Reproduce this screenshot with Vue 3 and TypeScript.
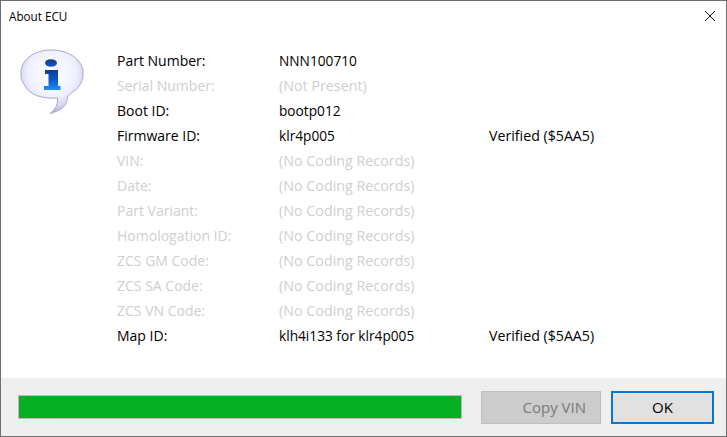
<script setup lang="ts">
interface Row { label: string; value: string; status?: string; on: boolean }
const none = '(No Coding Records)'
const rows: Row[] = [
  { label: 'Part Number:', value: 'NNN100710', on: true },
  { label: 'Serial Number:', value: '(Not Present)', on: false },
  { label: 'Boot ID:', value: 'bootp012', on: true },
  { label: 'Firmware ID:', value: 'klr4p005', status: 'Verified ($5AA5)', on: true },
  { label: 'VIN:', value: none, on: false },
  { label: 'Date:', value: none, on: false },
  { label: 'Part Variant:', value: none, on: false },
  { label: 'Homologation ID:', value: none, on: false },
  { label: 'ZCS GM Code:', value: none, on: false },
  { label: 'ZCS SA Code:', value: none, on: false },
  { label: 'ZCS VN Code:', value: none, on: false },
  { label: 'Map ID:', value: 'klh4i133 for klr4p005', status: 'Verified ($5AA5)', on: true },
]
</script>

<template>
  <div class="window">
    <header class="titlebar">
      <span class="title">About ECU</span>
      <svg class="close" width="10" height="10" viewBox="0 0 10 10">
        <path d="M0 0L10 10M10 0L0 10" stroke="#111" stroke-width="1" fill="none" />
      </svg>
    </header>
    <main class="body">
      <svg class="icon" width="66" height="66" viewBox="0 0 66 66">
        <defs>
          <radialGradient id="bub" cx="0.5" cy="0.36" r="0.62">
            <stop offset="0" stop-color="#ffffff" />
            <stop offset="0.62" stop-color="#f0f0fd" />
            <stop offset="0.86" stop-color="#d5d6f3" />
            <stop offset="1" stop-color="#a9abd8" />
          </radialGradient>
          <linearGradient id="ig" x1="0" y1="0" x2="0" y2="1">
            <stop offset="0" stop-color="#0b3c98" />
            <stop offset="0.45" stop-color="#0a56c4" />
            <stop offset="1" stop-color="#1c8ff2" />
          </linearGradient>
          <linearGradient id="dot" x1="0" y1="0" x2="0" y2="1">
            <stop offset="0" stop-color="#123a86" />
            <stop offset="1" stop-color="#0f5cc0" />
          </linearGradient>
        </defs>
        <path
          d="M31 1C48 1 63 10 63 24C63 32 60 38 54 42C50 45 48 46 47.5 48C47 54 46 60 30 64.5C36 60 38 55 37.5 49C22 50 10 46 5 37C0 30 0 22 3 15C8 6 19 1 31 1Z"
          fill="url(#bub)"
          stroke="#a6a8cc"
          stroke-width="1"
        />
        <ellipse cx="31" cy="14" rx="6" ry="3.8" fill="url(#dot)" />
        <path d="M25 21H38V37H40.5V41H24V37H28.5V25H25Z" fill="url(#ig)" />
      </svg>
      <section class="rows">
        <div v-for="row in rows" :key="row.label" class="row" :class="{ off: !row.on }">
          <span class="label">{{ row.label }}</span>
          <span class="value">{{ row.value }}</span>
          <span v-if="row.status" class="status">{{ row.status }}</span>
        </div>
      </section>
    </main>
    <footer class="footer">
      <div class="progress"><div class="fill"></div></div>
      <button class="btn copy" disabled>Copy VIN</button>
      <button class="btn ok">OK</button>
    </footer>
  </div>
</template>

<style>
html, body { margin: 0; padding: 0; background: #fff; }
</style>

<style scoped>
.window {
  box-sizing: border-box;
  width: 727px;
  height: 437px;
  border: 1px solid #6e6e6e;
  display: flex;
  flex-direction: column;
  background: #fff;
  font-family: "Open Sans", "Noto Sans", sans-serif;
  font-size: 14px;
  color: #000;
  overflow: hidden;
}
.titlebar {
  height: 30px;
  flex: none;
  display: flex;
  align-items: center;
  justify-content: space-between;
  padding: 0 11px 0 8px;
}
.title { font-size: 11.7px; }
.close { display: block; }
.body {
  flex: 1;
  display: flex;
  align-items: flex-start;
  padding-left: 19px;
}
.icon { flex: none; margin: 18px 31px 0 0; }
.rows { padding-top: 17px; }
.row { display: flex; height: 25px; align-items: center; }
.row.off { color: #cfcfcf; }
.label { width: 162px; flex: none; }
.value { width: 210px; flex: none; font-size: 13.7px; }
.row.off .value { font-size: 14.3px; }
.status { font-size: 14.2px; }
.footer {
  flex: none;
  height: 58px;
  background: #efefef;
  display: flex;
  align-items: center;
  padding: 0 12px 0 17px;
  box-sizing: border-box;
}
.progress {
  width: 444px;
  height: 24px;
  box-sizing: border-box;
  border: 1px solid #bcbcbc;
  background: #e6e6e6;
  margin-right: 19px;
  flex: none;
}
.fill { width: 100%; height: 100%; background: #06b025; }
.btn {
  height: 33px;
  box-sizing: border-box;
  font: inherit;
  font-size: 15px;
  padding: 0;
  flex: none;
}
.copy {
  width: 120px;
  margin-right: 10px;
  background: #cccccc;
  border: 1px solid #bfbfbf;
  color: #7a7a7a;
  text-align: right;
  padding-right: 14px;
}
.ok {
  width: 103px;
  background: #e1e1e1;
  border: 2px solid #0078d7;
  color: #000;
}
</style>
